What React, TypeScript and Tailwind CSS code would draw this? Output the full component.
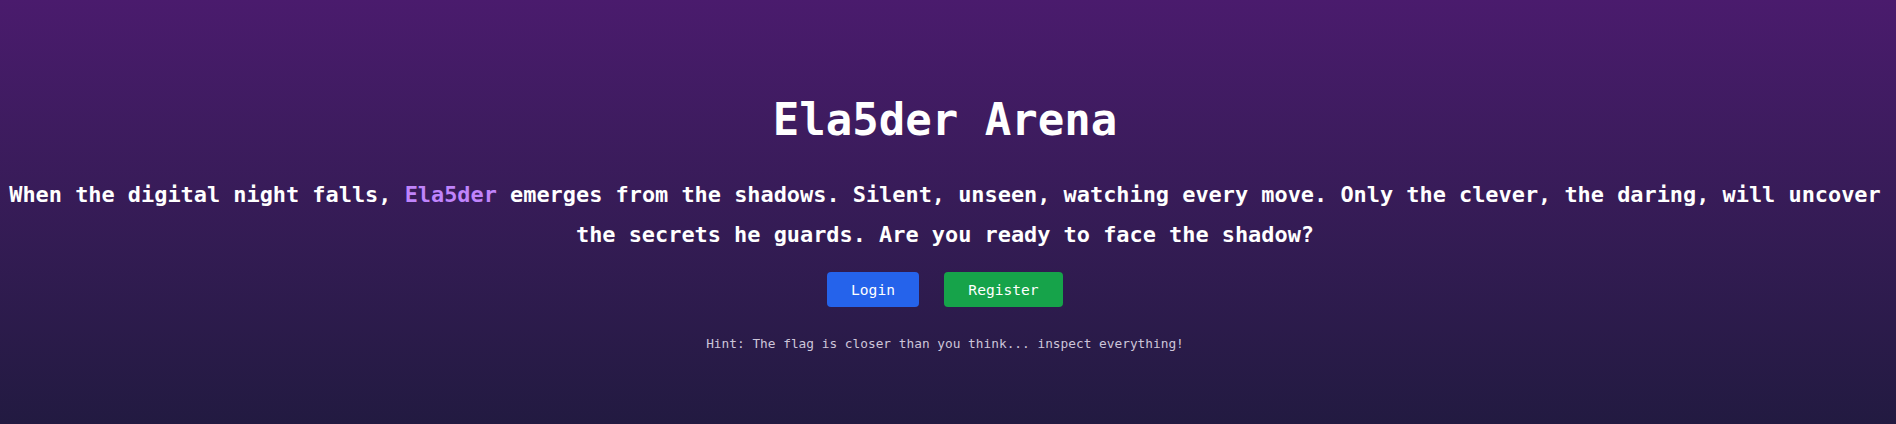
import React from 'react';

const mono = { fontFamily: '"DejaVu Sans Mono", "Liberation Mono", monospace' };

const App = () => {
  return (
    <div
      className="w-full h-screen overflow-hidden bg-gradient-to-b from-[#4a1b6d] to-[#221a41] text-white"
      style={mono}
    >
      <div className="flex flex-col pt-[92px] pr-[6px]">
        {/* Heading */}
        <h1 className="w-full text-center text-[44px] leading-[56px] font-bold">
          Ela5der Arena
        </h1>

        {/* Story text */}
        <p className="w-full mt-[27px] text-center text-[21.9px] leading-[40px] font-bold">
          When the digital night falls, <span className="text-[#c084fc]">Ela5der</span> emerges from the
          shadows. Silent, unseen, watching every move. Only the clever, the daring, will uncover the
          secrets he guards. Are you ready to face the shadow?
        </p>

        {/* Actions */}
        <div className="flex justify-center gap-[25px] mt-[17px]">
          <a
            href="#login"
            className="h-[35px] w-[92px] flex items-center justify-center rounded bg-[#2563eb] text-[14.6px] text-white"
          >
            Login
          </a>
          <a
            href="#register"
            className="h-[35px] w-[119px] flex items-center justify-center rounded bg-[#16a34a] text-[14.6px] text-white"
          >
            Register
          </a>
        </div>

        <p className="w-full mt-[27px] text-center text-[12.8px] leading-[20px] text-[#cdc5d9]">
          Hint: The flag is closer than you think... inspect everything!
        </p>
      </div>
    </div>
  );
};

export default App;
